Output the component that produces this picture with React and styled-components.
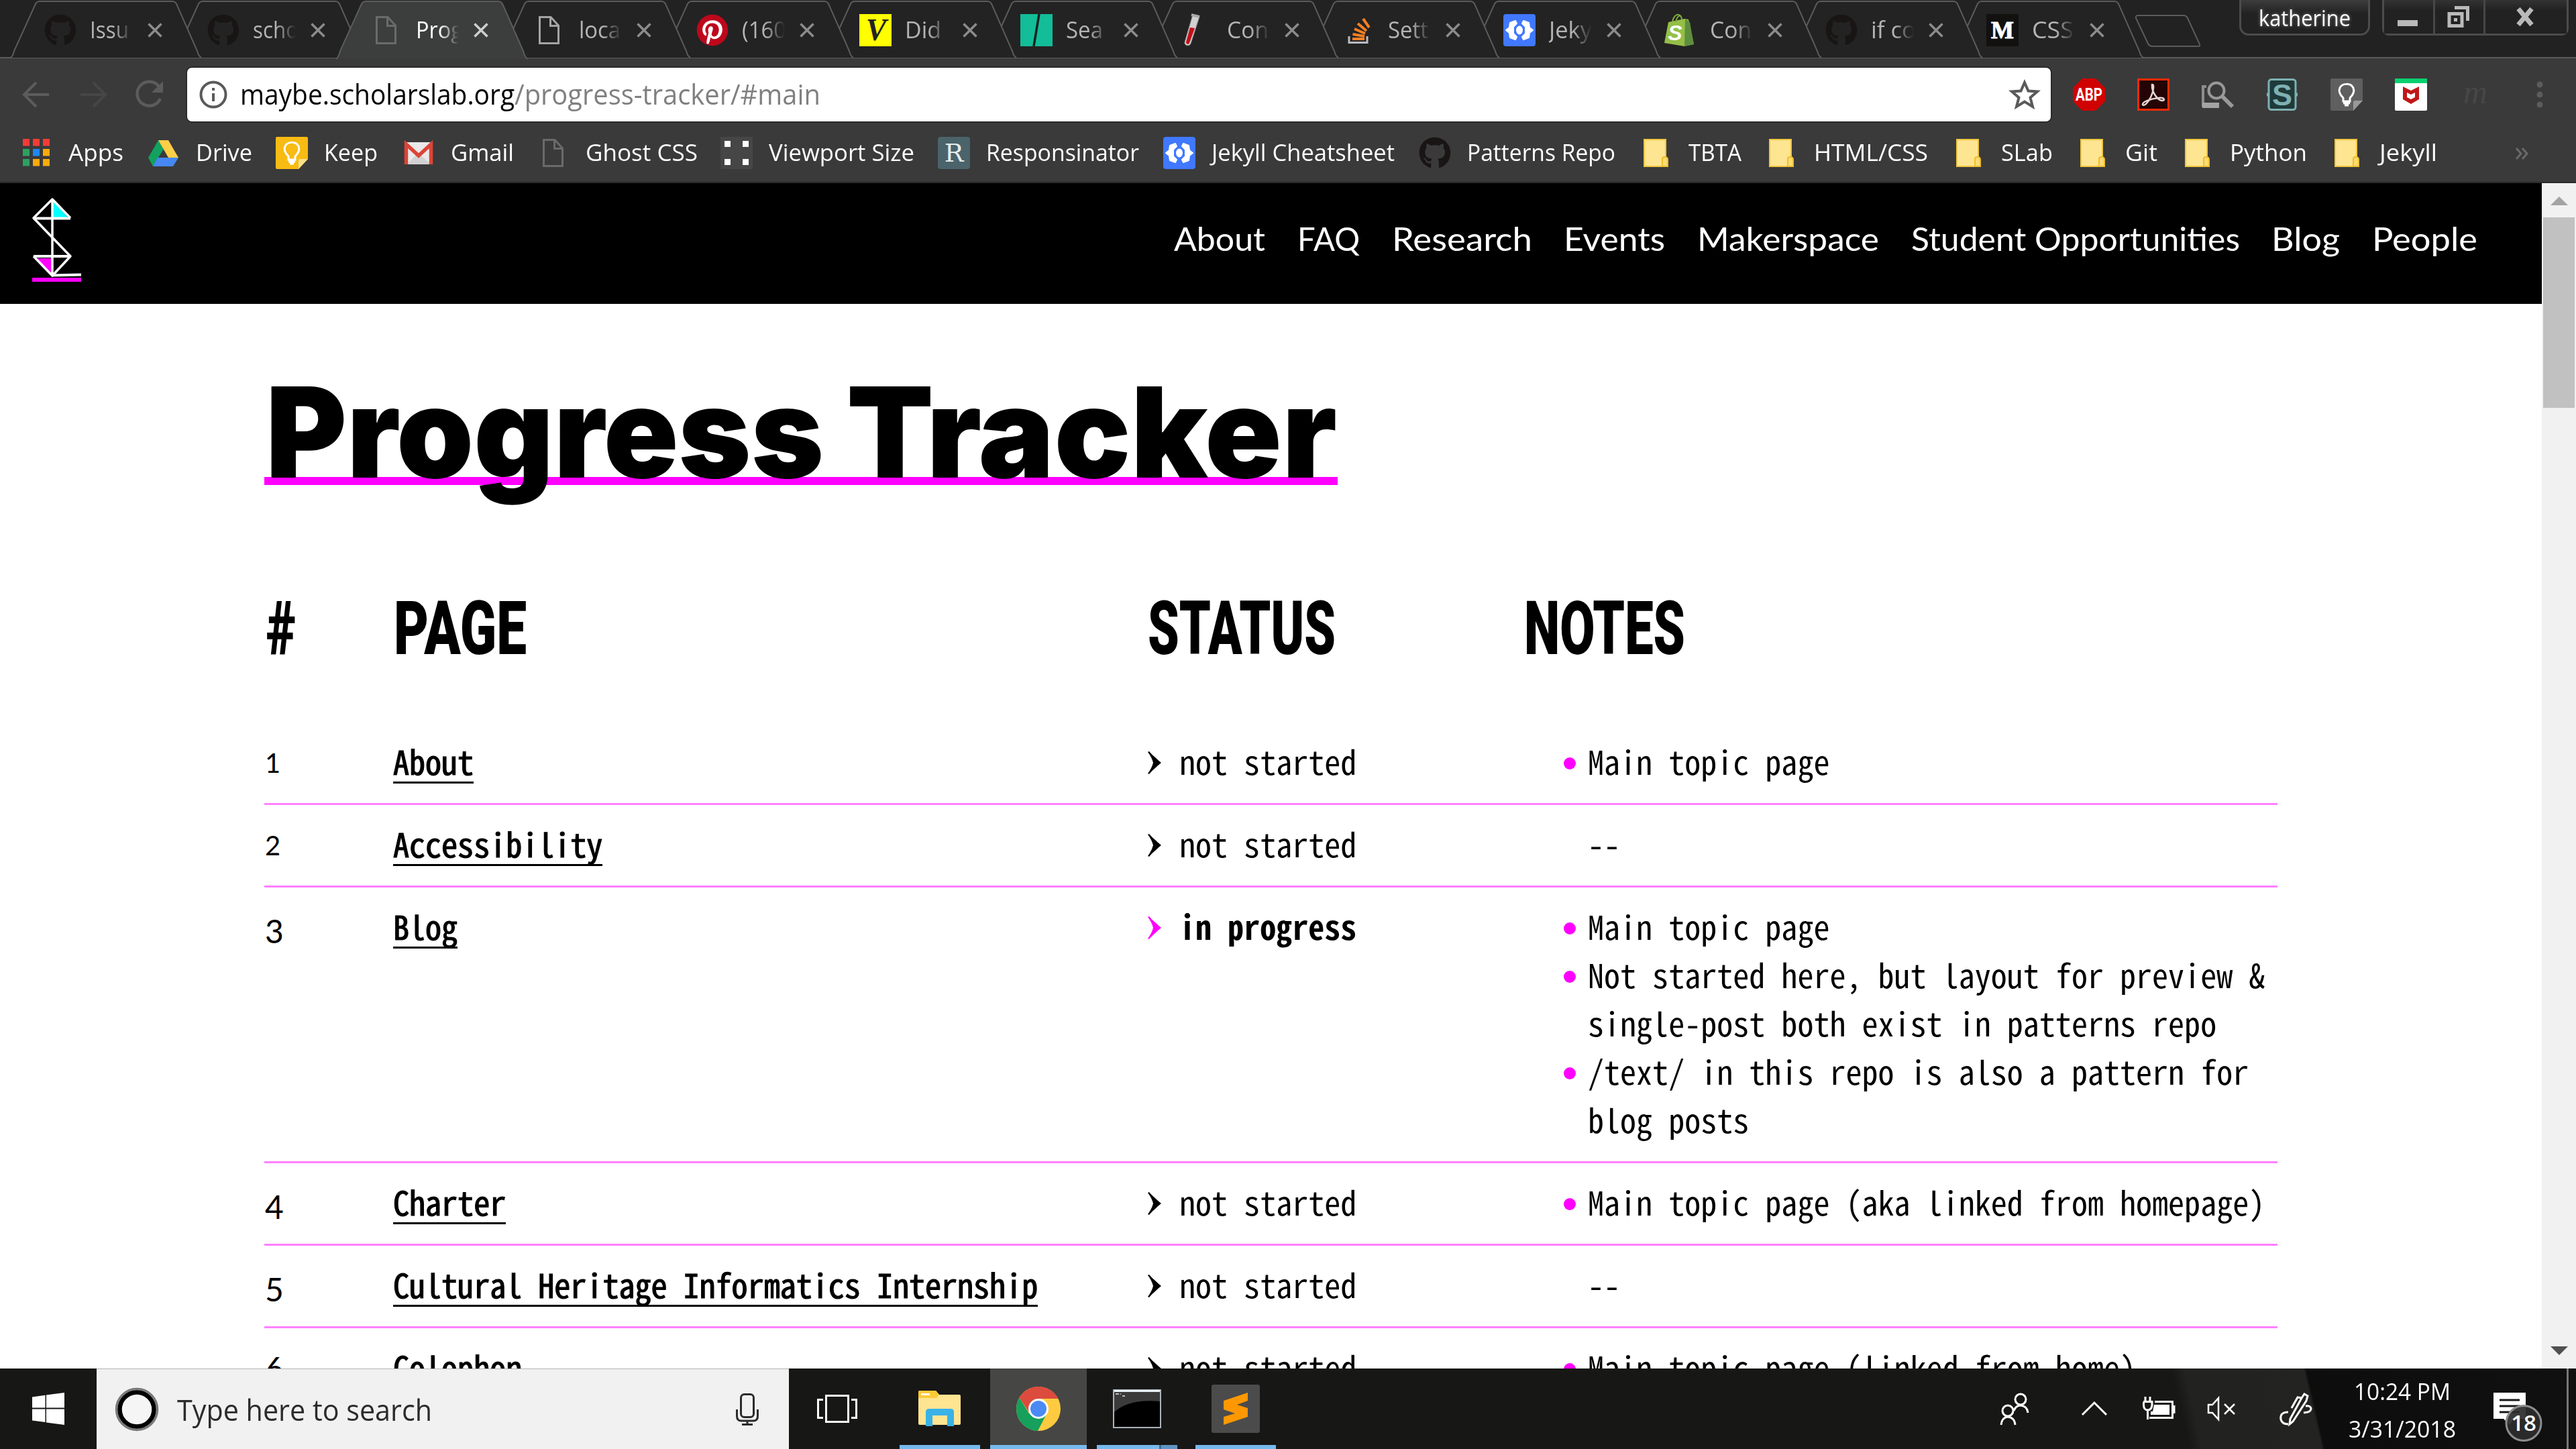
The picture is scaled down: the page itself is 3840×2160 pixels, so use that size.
import React, { useLayoutEffect, useRef, useState } from "react";
import styled, { createGlobalStyle } from "styled-components";
import { FaGithub, FaPinterest } from "react-icons/fa";

const UI = `"Open Sans", "Noto Sans", sans-serif`;
const MONO = `"Noto Sans Mono CJK JP", "DejaVu Sans Mono", monospace`;

const Global = createGlobalStyle`
  * { box-sizing: border-box; }
  body { margin: 0; background: #fff; overflow: hidden; }
  svg { display: block; flex: none; overflow: visible; }
  ul { margin: 0; padding: 0; list-style: none; }
  a { color: inherit; text-decoration: none; }
`;

/* ---------- text set to an exact measure ---------- */
const FitBox = styled.span`
  display: block;
  flex: none;
  width: ${(p) => p.$w}px;
  white-space: pre;
`;
const FitInk = styled.span`
  display: inline-block;
  transform-origin: 0 50%;
`;
function Fit({ w, children }) {
  const ref = useRef(null);
  const [k, setK] = useState(null);
  useLayoutEffect(() => {
    const natural = ref.current.getBoundingClientRect().width;
    if (natural) setK(w / natural);
  }, []);
  return (
    <FitBox $w={w}>
      <FitInk ref={ref} style={k ? { transform: `scaleX(${k})` } : undefined}>
        {children}
      </FitInk>
    </FitBox>
  );
}

/* ---------- icons ---------- */
const Svg = ({ w = 48, h = 48, children, ...r }) => (
  <svg width={w} height={h} viewBox={`0 0 ${w} ${h}`} fill="none" {...r}>
    {children}
  </svg>
);
const PageIcon = ({ c = "#6a6a6a" }) => (
  <Svg stroke={c} strokeWidth="3">
    <path d="M9.500 4.500H26L37.500 17V43.500H9.500Z M25.500 5V17.500H37" />
  </Svg>
);
const Github = () => <FaGithub size={48} color="#191515" />;
const Pinterest = () => (
  <Svg>
    <circle cx="24" cy="24" r="22" fill="#fff" />
    <FaPinterest size={48} color="#bd081c" />
  </Svg>
);
const GlyphText = styled.text`
  font-family: ${(p) => p.$f || "Liberation Serif"}, serif;
  font-weight: ${(p) => p.$wt || 700};
  font-style: ${(p) => p.$st || "normal"};
  font-size: ${(p) => p.$s}px;
  text-anchor: middle;
`;
const VIcon = () => (
  <Svg>
    <path d="M0 0H48V48H0Z" fill="#ff0" />
    <GlyphText x="25" y="39" $s={46} $st="italic" fill="#222">V</GlyphText>
  </Svg>
);
const SlashIcon = () => (
  <Svg>
    <path d="M0 0H48V48H0Z" fill="#12bd98" />
    <path d="M28 0L20 48" stroke="#162320" strokeWidth="3.500" />
  </Svg>
);
const TubeIcon = () => (
  <Svg>
    <path d="M17 1L27 4L14 44C12 49 4 47 5 42Z" fill="#d0d0d0" stroke="#888" />
    <path d="M13 20L20 21L12 43C11 46 7 45 7 42Z" fill="#c21018" />
    <path d="M15 1L27 4" stroke="#aaa" strokeWidth="4" />
  </Svg>
);
const StackIcon = () => (
  <Svg>
    <path d="M10 33V42.500H37V33" stroke="#b8bcc4" strokeWidth="3" />
    <g stroke="#f48024" strokeWidth="4">
      <path d="M15 37H33M15.500 30L33 33M18 22L34 29M23 14L36 25M31 7L40 20" />
    </g>
  </Svg>
);
const JekyllIcon = () => (
  <Svg>
    <rect width="48" height="48" rx="4" fill="#4078ff" />
    <path d="M18 10L10 13L9 20L4 24L9 28L10 35L18 38L20 34L15 29V19L20 14ZM30 10L38 13L39 20L44 24L39 28L38 35L30 38L28 34L33 29V19L28 14Z" fill="#fff" stroke="#fff" strokeLinejoin="round" strokeWidth="2" />
    <ellipse cx="24" cy="24" rx="5" ry="6.500" fill="#fff" />
  </Svg>
);
const ShopifyIcon = () => (
  <Svg>
    <path d="M6 12L30 7L36 8L44 45L30 48L0 43Z" fill="#95bf47" />
    <path d="M31 7L38 12L44 45L30 48Z" fill="#5e8e3e" />
    <path d="M12 12C13 4 18 0 21 1C25 2 26 6 26 9M17 12C18 5 22 1 25 3" stroke="#7fac3c" strokeWidth="2" />
    <GlyphText x="16" y="39" $s={32} $f="Liberation Sans" $st="italic" fill="#fff">S</GlyphText>
  </Svg>
);
const MediumIcon = () => (
  <Svg>
    <path d="M0 0H48V48H0Z" fill="#12110f" />
    <GlyphText x="24" y="36" $s={36} fill="#fff" stroke="#fff">M</GlyphText>
  </Svg>
);
const CloseIcon = ({ c }) => (
  <Svg w={22} h={22} stroke={c} strokeWidth="3.500">
    <path d="M1.500 1.500L20.500 20.500M20.500 1.500L1.500 20.500" />
  </Svg>
);
const AppsIcon = () => {
  const c = ["#f43c36", "#f43c36", "#f43c36", "#2da160", "#1e88f5", "#f9ab0b", "#2da160", "#f9ab0b", "#f9ab0b"];
  return (
    <Svg>
      {c.map((f, i) => (
        <rect key={i} x={4 + (i % 3) * 15} y={3 + Math.floor(i / 3) * 15} width="10" height="10.500" fill={f} />
      ))}
    </Svg>
  );
};
const DriveIcon = () => (
  <Svg>
    <path d="M16 5L1 31L8 44L24 18Z" fill="#12a15f" />
    <path d="M16 5H31L46 31H31Z" fill="#ffcf48" />
    <path d="M15 31H46L38 44H8Z" fill="#4687f4" />
  </Svg>
);
const BulbIcon = ({ bg, line, fold }) => (
  <Svg>
    <path d="M2 0H46Q48 0 48 2V33L34 48H2Q0 48 0 46V2Q0 0 2 0Z" fill={bg} />
    <path d="M48 33H36Q34 33 34 36V48Z" fill={fold} />
    <path d="M19 29C13 23 12 18 14 14C17 7 30 6 34 14C36 19 34 24 29 29V34H19ZM19 37H29M21 40H27" stroke={line} strokeWidth="3" />
  </Svg>
);
const GmailIcon = () => (
  <Svg>
    <rect x="3" y="8" width="42" height="33" rx="3" fill="#e9e9e9" />
    <path d="M6 41L24 24L42 41Z" fill="#d2d2d2" />
    <path d="M5.500 41V11L24 28L42.500 11V41" stroke="#db4437" strokeWidth="5.500" />
  </Svg>
);
const ViewportIcon = () => (
  <Svg>
    <path d="M0 0H48V48H0Z" fill="#464646" />
    <path d="M6 6H15V15H6ZM33 6H42V15H33ZM6 33H15V42H6ZM33 33H42V42H33Z" fill="#fff" />
  </Svg>
);
const RespIcon = () => (
  <Svg>
    <rect width="48" height="48" rx="4" fill="#4b636b" />
    <GlyphText x="24" y="37" $s={38} $f="DejaVu Serif" $wt={400} fill="#e4ebec">R</GlyphText>
  </Svg>
);
const FolderIcon = () => (
  <Svg>
    <rect x="6" y="4" width="32" height="40" fill="#fee592" stroke="#efc73f" strokeWidth="2" />
    <path d="M33 44V33Q33 30 36 30H38Q41 31 41 34V44Z" fill="#fbdc72" stroke="#eebf2d" strokeWidth="2" />
  </Svg>
);
const AbpIcon = () => (
  <Svg>
    <path d="M14 0H34L48 14V34L34 48H14L0 34V14Z" fill="#d00202" />
    <GlyphText x="24" y="33" $s={25} $f="Roboto" textLength="40" lengthAdjust="spacingAndGlyphs" fill="#fff">ABP</GlyphText>
  </Svg>
);
const AcrobatIcon = () => (
  <Svg>
    <rect x="1.500" y="1.500" width="45" height="45" fill="#240404" stroke="#fa2a05" strokeWidth="3" />
    <path d="M22 9C26 8 24 20 20 28C16 36 10 42 8 39C7 35 20 30 32 29C41 28 42 33 37 33C30 32 21 20 22 9Z" stroke="#e5d5d5" strokeWidth="2.500" />
  </Svg>
);
const FinderIcon = () => (
  <Svg>
    <path d="M7 12H2V40H26" stroke="#8d8d8d" strokeWidth="4" />
    <path d="M1 36H26V44H1Z" fill="#a4a4a4" />
    <circle cx="22" cy="18" r="11.500" stroke="#999" strokeWidth="4" />
    <path d="M31 27L46 42" stroke="#999" strokeWidth="6" />
  </Svg>
);
const StylusIcon = () => (
  <Svg>
    <rect x="4" y="1.500" width="40" height="45" rx="4" fill="#1f3a3a" stroke="#7fb0b2" strokeWidth="3" />
    <path d="M1 24H5M43 24H47" stroke="#7fb0b2" strokeWidth="5" />
    <GlyphText x="24" y="40" $s={45} $f="Liberation Sans" fill="#7fb0b2">S</GlyphText>
  </Svg>
);
const McafeeIcon = () => (
  <Svg>
    <rect width="48" height="48" rx="2" fill="#fff" />
    <path d="M0 0H48V7H0Z" fill="#0bd070" />
    <path d="M12 12L24 18L36 12V31L24 38L12 31Z" fill="#c01818" />
    <path d="M18 21L24 24L30 21V28L24 31L18 28Z" fill="#fff" />
  </Svg>
);
const FadedM = () => (
  <Svg>
    <GlyphText x="24" y="37" $s={50} $wt={400} $st="italic" fill="#474747">m</GlyphText>
  </Svg>
);

/* ---------- browser frame ---------- */
const Screen = styled.div`
  width: 3840px;
  height: 2160px;
  display: flex;
  flex-direction: column;
  overflow: hidden;
  font-family: ${UI};
`;
const TabStrip = styled.div`
  height: 87px;
  display: flex;
  background: #222;
  padding-left: 15px;
  border-bottom: 2px solid #5c5c5c;
`;
const Tab = styled.div`
  position: relative;
  z-index: ${(p) => p.$z};
  flex: none;
  width: ${(p) => p.$w}px;
  height: 87px;
  padding-left: 51px;
  display: flex;
  align-items: center;
`;
const TabShape = styled.svg`
  position: absolute;
  z-index: -1;
  left: 0;
  top: 0;
`;
const TabIcon = styled.div`
  width: 48px;
  height: 48px;
  margin-top: 3px;
`;
const TabTitle = styled.div`
  width: 64px;
  margin: 0 22px 0 20px;
  font-size: 35px;
  line-height: 86px;
  color: ${(p) => (p.$on ? "#fff" : "#b4b4b4")};
  mask-image: linear-gradient(90deg, #000 55%, transparent 100%);
`;
const CloseButton = styled.div`
  margin-top: 3px;
`;
const NewTab = styled.div`
  position: relative;
  z-index: 1;
  padding: 22px 0 0 31px;
`;
const Spacer = styled.div`
  flex: 1;
`;
const UserChip = styled.div`
  width: 195px;
  height: 53px;
  border: 3px solid #4c4c4c;
  border-top: 0;
  border-radius: 0 0 14px 14px;
  background: linear-gradient(#3d3d3d, #222 40%);
  display: flex;
  justify-content: center;
  color: #fff;
  font-size: 33px;
  line-height: 53px;
  text-shadow: 0 0 6px #888;
`;
const WinButtons = styled.div`
  display: flex;
  width: 278px;
  height: 53px;
  margin: 0 11px 0 18px;
  border: 3px solid #4c4c4c;
  border-top: 0;
  border-radius: 0 0 10px 10px;
`;
const WinButton = styled.div`
  width: ${(p) => p.$w}px;
  display: flex;
  align-items: center;
  justify-content: center;
  padding-right: 3px;
  background: linear-gradient(#333, #222 30%);
  & + & {
    border-left: 3px solid #474747;
  }
`;
const Toolbar = styled.div`
  height: 107px;
  flex: none;
  display: flex;
  align-items: flex-start;
  padding: 14px 0 0 30px;
  background: #3a3a3a;
`;
const NavButton = styled.div`
  width: ${(p) => p.$w}px;
  flex: none;
  height: 79px;
  display: flex;
  align-items: center;
`;
const UrlBox = styled.div`
  width: 2778px;
  flex: none;
  height: 80px;
  display: flex;
  align-items: center;
  padding: 0 15px 0 17px;
  margin-right: 33px;
  background: #fff;
  border-radius: 7px;
  box-shadow: 0 0 0 2px #2b2b2b;
  font-size: 42px;
  line-height: 76px;
`;
const UrlText = styled.div`
  margin: -2px 0 0 18px;
  color: ${(p) => p.$c};
  & + & {
    margin-left: 0;
  }
`;
const Extensions = styled.div`
  height: 80px;
  display: flex;
  align-items: center;
  gap: 48px;
`;
const Bookmarks = styled.div`
  height: 79px;
  flex: none;
  display: flex;
  align-items: flex-start;
  padding: 10px 0 0 30px;
  background: #3a3a3a;
  border-bottom: 2px solid #292929;
`;
const Bookmark = styled.div`
  width: ${(p) => p.$w}px;
  flex: none;
  display: flex;
  gap: 24px;
  color: #fff;
  font-size: 35px;
  line-height: 46px;
`;
const Overflow = styled.div`
  padding: 16px 0 0 47px;
`;

/* ---------- page ---------- */
const Viewport = styled.div`
  height: 1767px;
  flex: none;
  display: flex;
  overflow: hidden;
`;
const Page = styled.div`
  width: 3789px;
  background: #fff;
  color: #000;
`;
const SiteHeader = styled.header`
  height: 180px;
  display: flex;
  justify-content: space-between;
  background: #000;
  padding: 20px 96px 0 48px;
`;
const SiteNav = styled.nav`
  display: flex;
  gap: 47.700px;
  padding-top: 27px;
  color: #fff;
  font: 400 48px/72px Lato, sans-serif;
`;
const Main = styled.main`
  width: 3001px;
  margin-left: 394px;
`;
const Title = styled.h1`
  width: 1600px;
  height: 300px;
  margin: 0 0 61px;
  padding: 71px 0 0 2px;
  display: flex;
  gap: 34px;
  font: 900 187px/240px Inter, sans-serif;
  background: linear-gradient(#ff00ff, #ff00ff) 0 258px / 1600px 12px no-repeat;
`;
const HeadRow = styled.div`
  display: grid;
  grid-template-columns: 190px 1124px 561px 1fr;
  height: 263px;
  padding: 63px 0 0 3px;
  font: 900 111px/120px Roboto, sans-serif;
`;
const Row = styled.div`
  display: grid;
  grid-template-columns: 192px 1125px 618px 1fr;
  padding: 24px 0;
  border-bottom: 3px solid #ff80ff;
  font: 400 49px/72px ${MONO};
`;
const Num = styled.div`
  height: 72px;
  padding: ${(p) => p.$dy}px 0 0 1px;
  font: 400 ${(p) => p.$s}px/72px Lato, sans-serif;
`;
const PageLink = styled.a`
  height: 67px;
  justify-self: start;
  border-bottom: 3px solid #000;
  -webkit-text-stroke: 1.200px #000;
`;
const Status = styled.div`
  height: 72px;
  display: flex;
  align-items: center;
  gap: 27px;
  font-weight: ${(p) => (p.$bold ? 700 : 400)};
`;
const MonoLine = styled.div`
  margin: -3px 0 3px;
`;
const Note = styled.li`
  display: flex;
`;
const Bullet = styled.span`
  width: 18px;
  height: 18px;
  margin: 28px 18px 0 2px;
  border-radius: 50%;
  background: ${(p) => (p.$on ? "#ff00ff" : "transparent")};
`;
const Scrollbar = styled.div`
  width: 51px;
  background: #f1f1f1;
  display: flex;
  flex-direction: column;
  align-items: center;
  padding: 20px 0;
`;
const Thumb = styled.div`
  width: 47px;
  height: 284px;
  margin: 18px 0 auto;
  background: #c1c1c1;
`;

/* ---------- taskbar ---------- */
const Taskbar = styled.div`
  height: 120px;
  flex: none;
  display: flex;
  align-items: stretch;
  color: #fff;
  background: linear-gradient(77deg, transparent 0, transparent 84.400%, #222221 84.900%, #232322 89.500%, #0d0d0d 89.600%, #101010 100%), #171716;
`;
const Start = styled.div`
  width: 144px;
  display: flex;
  align-items: center;
  justify-content: center;
`;
const Search = styled.div`
  width: 1032px;
  display: flex;
  align-items: center;
  padding: 0 44px 0 28px;
  background: #f1f1f1;
  border-top: 1px solid #b5b5b5;
  color: #2b2b2b;
  font-size: 43px;
  line-height: 118px;
`;
const SearchText = styled.div`
  margin: 2px auto 0 28px;
`;
const Task = styled.div`
  width: ${(p) => p.$w || 144}px;
  padding-left: ${(p) => p.$pl || 0}px;
  display: flex;
  flex-direction: column;
  align-items: center;
  justify-content: space-between;
  background: ${(p) => (p.$active ? "#464645" : "transparent")};
`;
const TaskIcon = styled.div`
  height: 114px;
  padding-top: 6px;
  display: flex;
  align-items: center;
`;
const Underline = styled.div`
  width: ${(p) => p.$w}px;
  height: 6px;
  background: ${(p) => p.$bg || "#76b9ed"};
`;
const Tray = styled.div`
  display: flex;
  align-items: center;
`;
const TrayItem = styled.div`
  width: ${(p) => p.$w}px;
`;
const Clock = styled.div`
  width: 216px;
  display: flex;
  flex-direction: column;
  align-items: center;
  padding-top: 4px;
  font-size: 35px;
  line-height: 56px;
`;
const Notifications = styled.div`
  width: 137px;
  padding: 28px 0 0 28px;
`;
const Edge = styled.div`
  width: 14px;
  height: 120px;
  border-left: 3px solid #777;
`;

/* ---------- data ---------- */
const tabs = [
  ["Issu", 58, 243, Github],
  ["scho", 68, 243, Github],
  ["Prog", 70, 243, PageIcon],
  ["loca", 62, 243, () => <PageIcon c="#a4a4a4" />],
  ["(160", 66, 243, Pinterest],
  ["Did", 54, 240, VIcon],
  ["Sea", 55, 240, SlashIcon],
  ["Con", 62, 240, TubeIcon],
  ["Sett", 60, 240, StackIcon],
  ["Jeky", 64, 240, JekyllIcon],
  ["Con", 62, 240, ShopifyIcon],
  ["if co", 67, 240, Github],
  ["CSS", 62, 240, MediumIcon],
];
const Keep = () => <BulbIcon bg="#f8bb13" line="#fff" fold="#fee08a" />;
const KeepGray = () => <BulbIcon bg="#5f5f5f" line="#fff" fold="#999" />;
const bookmarks = [
  ["Apps", 82, 190, AppsIcon],
  ["Drive", 84, 191, DriveIcon],
  ["Keep", 80, 189, Keep],
  ["Gmail", 94, 201, GmailIcon],
  ["Ghost CSS", 167, 273, PageIcon],
  ["Viewport Size", 217, 324, ViewportIcon],
  ["Responsinator", 228, 336, RespIcon],
  ["Jekyll Cheatsheet", 273, 381, JekyllIcon],
  ["Patterns Repo", 221, 330, Github],
  ["TBTA", 79, 187, FolderIcon],
  ["HTML/CSS", 170, 279, FolderIcon],
  ["SLab", 77, 185, FolderIcon],
  ["Git", 48, 156, FolderIcon],
  ["Python", 115, 223, FolderIcon],
  ["Jekyll", 86, 228, FolderIcon],
];
const nav = [
  ["About", 136], ["FAQ", 93], ["Research", 209], ["Events", 151],
  ["Makerspace", 271], ["Student Opportunities", 490], ["Blog", 102], ["People", 157],
];
const rows = [
  { n: 1, s: 40, dy: 0, page: "About", notes: [["Main topic page"]] },
  { n: 2, s: 40, dy: 0, page: "Accessibility", notes: null },
  {
    n: 3, s: 48, dy: 5, page: "Blog", busy: true,
    notes: [
      ["Main topic page"],
      ["Not started here, but layout for preview &", "single-post both exist in patterns repo"],
      ["/text/ in this repo is also a pattern for", "blog posts"],
    ],
  },
  { n: 4, s: 48, dy: 5, page: "Charter", notes: [["Main topic page (aka linked from homepage)"]] },
  { n: 5, s: 48, dy: 5, page: "Cultural Heritage Informatics Internship", notes: null },
  { n: 6, s: 48, dy: 0, page: "Colophon", notes: [["Main topic page (linked from home)"]] },
];
const Mono = ({ children }) => (
  <MonoLine><Fit w={children.length * 24.03}>{children}</Fit></MonoLine>
);

export default function App() {
  return (
    <Screen>
      <Global />
      <TabStrip>
        {tabs.map(([t, tw, w, Icon], i) => {
          const on = i === 2;
          return (
            <Tab key={i} $z={on ? 30 : 20 - i} $w={w}>
              <TabShape width="285" height="87">
                <path
                  d={`M0 ${on ? 88 : 86}C4 85 5 80 6 76L37 8Q39 2 44 2H242Q247 2 249 8L279 76Q281 84 285 ${on ? 88 : 86}`}
                  fill={on ? "#3c3e3d" : "#232323"}
                  stroke="#5c5c5c"
                  strokeWidth="2"
                />
              </TabShape>
              <TabIcon><Icon /></TabIcon>
              <TabTitle $on={on}><Fit w={tw}>{t}</Fit></TabTitle>
              <CloseButton><CloseIcon c={on ? "#cfcfcf" : "#8c8c8c"} /></CloseButton>
            </Tab>
          );
        })}
        <NewTab>
          <Svg w={100} h={50}>
            <path d="M6 1H74Q78 1 80 5L98 44Q99 47 96 47H28Q23 47 21 43L3 5Q2 1 6 1Z" stroke="#5c5c5c" strokeWidth="2" />
          </Svg>
        </NewTab>
        <Spacer />
        <UserChip><Fit w={137}>katherine</Fit></UserChip>
        <WinButtons>
          <WinButton $w={73}>
            <Svg w={30} h={30}><path d="M0 20H30V29H0Z" fill="#b9b9b9" /></Svg>
          </WinButton>
          <WinButton $w={75}>
            <Svg w={34} h={34} stroke="#b9b9b9" strokeWidth="5">
              <path d="M11 3.500H30.500V23" /><path d="M3 12.500H22V30.500H3Z" /><path d="M10 19H15V24H10Z" fill="#b9b9b9" stroke="none" />
            </Svg>
          </WinButton>
          <WinButton $w={124}>
            <Svg w={28} h={26} stroke="#b9b9b9" strokeWidth="7"><path d="M4 1L24 25M24 1L4 25" /></Svg>
          </WinButton>
        </WinButtons>
      </TabStrip>

      <Toolbar>
        <NavButton $w={86}>
          <Svg stroke="#5c5c5c" strokeWidth="4"><path d="M43 24H7M24 6L6 24L24 42" /></Svg>
        </NavButton>
        <NavButton $w={83}>
          <Svg stroke="#464646" strokeWidth="4"><path d="M4 24H40M23 6L41 24L23 42" /></Svg>
        </NavButton>
        <NavButton $w={80}>
          <Svg>
            <path d="M38 12A18 18 0 1 0 40 30" stroke="#5c5c5c" strokeWidth="4.500" />
            <path d="M44 4V21H27Z" fill="#5c5c5c" />
          </Svg>
        </NavButton>
        <UrlBox>
          <Svg w={44} h={44}>
            <circle cx="22" cy="22" r="18.500" stroke="#5a5a5a" strokeWidth="4" />
            <path d="M20 20H24V32H20ZM20 12H24V16H20Z" fill="#5a5a5a" />
          </Svg>
          <UrlText $c="#000"><Fit w={409}>maybe.scholarslab.org</Fit></UrlText>
          <UrlText $c="#808080"><Fit w={456}>/progress-tracker/#main</Fit></UrlText>
          <Spacer />
          <Svg w={48} h={48} stroke="#5a5a5a" strokeWidth="4">
            <path d="M24 6L29.500 18.500L43 19.500L32.500 28.500L36 42L24 34.500L12 42L15.500 28.500L5 19.500L18.500 18.500Z" />
          </Svg>
        </UrlBox>
        <Extensions>
          <AbpIcon /><AcrobatIcon /><FinderIcon /><StylusIcon /><KeepGray /><McafeeIcon /><FadedM />
          <Svg>
            <g fill="#5c5c5c"><circle cx="24" cy="9" r="4.500" /><circle cx="24" cy="24" r="4.500" /><circle cx="24" cy="39" r="4.500" /></g>
          </Svg>
        </Extensions>
      </Toolbar>
      <Bookmarks>
        {bookmarks.map(([t, tw, w, Icon], i) => (
          <Bookmark key={i} $w={w}><Icon /><Fit w={tw}>{t}</Fit></Bookmark>
        ))}
        <Overflow>
          <Svg w={20} h={18} stroke="#6a6a6a" strokeWidth="3"><path d="M1 1L8 9L1 17M10 1L17 9L10 17" /></Svg>
        </Overflow>
      </Bookmarks>

      <Viewport>
        <Page>
          <SiteHeader>
            <Svg w={74} h={128}>
              <path d="M31 6L53 31H31Z" fill="#0ff" />
              <path d="M5 92H29V115Z" fill="#f0f" />
              <g stroke="#fff" strokeWidth="3.500" strokeLinejoin="round">
                <path d="M30 118V4L2 32L57 89L30 118L2 89M30 4L57 32" />
                <path d="M2 32.500H57M2 89H57M29 117.500L73 116.500" strokeWidth="4" />
              </g>
              <path d="M0 121H73V127H0Z" fill="#f0f" />
            </Svg>
            <SiteNav>
              {nav.map(([t, w]) => <a key={t}><Fit w={w}>{t}</Fit></a>)}
            </SiteNav>
          </SiteHeader>
          <Main>
            <Title><Fit w={832}>Progress</Fit><Fit w={731}>Tracker</Fit></Title>
            <HeadRow>
              <Fit w={44}>#</Fit><Fit w={198}>PAGE</Fit><Fit w={280}>STATUS</Fit><Fit w={240}>NOTES</Fit>
            </HeadRow>
            {rows.map((r) => (
              <Row key={r.n}>
                <Num $s={r.s} $dy={r.dy}>{r.n}</Num>
                <PageLink><Mono>{r.page}</Mono></PageLink>
                <Status $bold={r.busy}>
                  <Svg w={20} h={34}>
                    <path d="M2 0Q6 5 11 9Q15 13 20 17Q15 21 11 25Q6 29 2 34L0 33Q6 25 8 17Q6 9 0 1Z" fill={r.busy ? "#f0f" : "#000"} />
                  </Svg>
                  <Mono>{r.busy ? "in progress" : "not started"}</Mono>
                </Status>
                <ul>
                  {(r.notes || [["--"]]).map((lines, i) => (
                    <Note key={i}>
                      <Bullet $on={!!r.notes} />
                      <div>{lines.map((l) => <Mono key={l}>{l}</Mono>)}</div>
                    </Note>
                  ))}
                </ul>
              </Row>
            ))}
          </Main>
        </Page>
        <Scrollbar>
          <Svg w={26} h={13}><path d="M13 0L26 13H0Z" fill="#a3a3a3" /></Svg>
          <Thumb />
          <Svg w={26} h={13}><path d="M13 13L26 0H0Z" fill="#505050" /></Svg>
        </Scrollbar>
      </Viewport>

      <Taskbar>
        <Start>
          <Svg><path d="M0 6.500L19.500 3.800V22.500H0ZM21 3.500L48 0V22.500H21ZM0 24.500H19.500V44L0 41.500ZM21 24.500H48V48L21 44.500Z" fill="#fff" /></Svg>
        </Start>
        <Search>
          <Svg w={64} h={64}>
            <circle cx="32" cy="32" r="30.500" stroke="#7a7a7a" strokeWidth="3.500" />
            <circle cx="32" cy="32" r="25.500" stroke="#000" strokeWidth="6.500" fill="#f5f5f5" />
          </Svg>
          <SearchText><Fit w={380}>Type here to search</Fit></SearchText>
          <Svg w={36} h={48} stroke="#2b2b2b" strokeWidth="3">
            <rect x="8.500" y="1.500" width="19" height="34" rx="5" />
            <path d="M2.500 24V34Q2.500 41 9 41H27Q33.500 41 33.500 34V24M18 41V47M10 46.500H26" />
          </Svg>
        </Search>
        <Task>
          <TaskIcon>
            <Svg w={60} h={42} stroke="#fff" strokeWidth="3">
              <path d="M13.500 1.500H46.500V40.500H13.500ZM9 7.500H1.500V34.500H9M51 7.500H58.500V34.500H51" />
            </Svg>
          </TaskIcon>
        </Task>
        <Task $w={156} $pl={6}>
          <TaskIcon>
            <Svg w={64} h={54}>
              <path d="M2 0H26L31 6H61Q63 6 63 8V49Q63 51 61 51H2Q0 51 0 49V2Q0 0 2 0Z" fill="#fee592" />
              <path d="M2 0H26L31 6L27 11H0V2Q0 0 2 0Z" fill="#fccb38" />
              <path d="M4 4H17V7H4Z" fill="#fff" />
              <path d="M11 53V32Q11 27 16 27H48Q53 27 53 32V53H43V37H21V53Z" fill="#39b2e7" />
            </Svg>
          </TaskIcon>
          <Underline $w={120} />
        </Task>
        <Task $active>
          <TaskIcon>
            <Svg w={66} h={66}>
              <circle cx="33" cy="33" r="33" fill="#fecb40" />
              <path d="M4.500 16.500A33 33 0 0 1 62.500 18H33L20 40Z" fill="#dc4b3e" />
              <path d="M4.500 16.500A33 33 0 0 0 32 66L45 41L33 46L19 40Z" fill="#15a05c" />
              <circle cx="33" cy="33" r="15" fill="#fff" />
              <circle cx="33" cy="33" r="12" fill="#4b8af5" />
            </Svg>
          </TaskIcon>
          <Underline $w={144} />
        </Task>
        <Task $w={150}>
          <TaskIcon>
            <Svg w={72} h={58}>
              <rect x="1" y="1" width="70" height="56" fill="#000" stroke="#aab3bb" strokeWidth="2" />
              <path d="M2 2H70V18Q24 14 2 34Z" fill="#3b3b3b" />
              <path d="M2 1H70V4H2Z" fill="#e8eef2" />
              <path d="M4 7H9M11 7H12M14 10H18" stroke="#bbb" strokeWidth="2" />
            </Svg>
          </TaskIcon>
          <Underline $w={120} $bg="linear-gradient(90deg, #76b9ed 93px, #43698a 93px, #43698a 96px, #5f95c2 96px)" />
        </Task>
        <Task $w={144}>
          <TaskIcon>
            <Svg w={72} h={72}>
              <rect width="72" height="72" rx="3" fill="#4b4b4b" />
              <path d="M54 12L18 24V37L35 43L18 48V60L54 48V35L38 30L54 24Z" fill="#ff9800" />
            </Svg>
          </TaskIcon>
          <Underline $w={120} />
        </Task>
        <Spacer />
        <Tray>
          <TrayItem $w={122}>
            <Svg w={44} h={48} stroke="#fff" strokeWidth="3">
              <circle cx="31" cy="10" r="8" /><circle cx="12" cy="27" r="8" />
              <path d="M21 27Q24 19 31 19Q41 20 42 30M2 48Q3 37 12 36Q22 37 23 48" />
            </Svg>
          </TrayItem>
          <TrayItem $w={91}>
            <Svg w={38} h={22} stroke="#fff" strokeWidth="3"><path d="M1 20L19 2L37 20" /></Svg>
          </TrayItem>
          <TrayItem $w={96}>
            <Svg w={50} h={36} stroke="#fff" strokeWidth="3">
              <path d="M18 7.500H44.500V31.500H10M47 13V25" /><path d="M17 12H40V27H12V22H15Z" fill="#fff" stroke="none" />
              <path d="M4 0V7M11 0V7M1 7.500H14V13Q13 20 7.500 20Q2 20 1.500 13V8M7.500 20V34" />
            </Svg>
          </TrayItem>
          <TrayItem $w={108}>
            <Svg w={44} h={36} stroke="#fff" strokeWidth="2.500">
              <path d="M2 12H8L17 2V34L8 24H2ZM26 11L41 26M41 11L26 26" />
            </Svg>
          </TrayItem>
          <TrayItem $w={75}>
            <Svg w={50} h={48} stroke="#fff" strokeWidth="3">
              <path d="M33 8L37 2L42 5L40 12L20 43L15 47L16 39ZM34 8L27 7L18 23M13 29C3 29 1 34 2 40Q4 47 13 47M39 20C48 18 50 27 42 29L36 30" />
            </Svg>
          </TrayItem>
          <Clock><Fit w={144}>10:24 PM</Fit><Fit w={160}>3/31/2018</Fit></Clock>
          <Notifications>
            <Svg w={80} h={76}>
              <path d="M0 0H48V39H30L24 48L15 39H0Z" fill="#fff" />
              <path d="M9 11H39M9 20H39M9 29H39" stroke="#171716" strokeWidth="3" />
              <circle cx="45" cy="45.500" r="26" fill="#2c2c2c" fillOpacity=".93" stroke="#8d8d8d" strokeWidth="3" />
              <GlyphText x="45" y="57" $s={33} $f="Open Sans" $wt={600} fill="#fff">18</GlyphText>
            </Svg>
          </Notifications>
          <Edge />
        </Tray>
      </Taskbar>
    </Screen>
  );
}
